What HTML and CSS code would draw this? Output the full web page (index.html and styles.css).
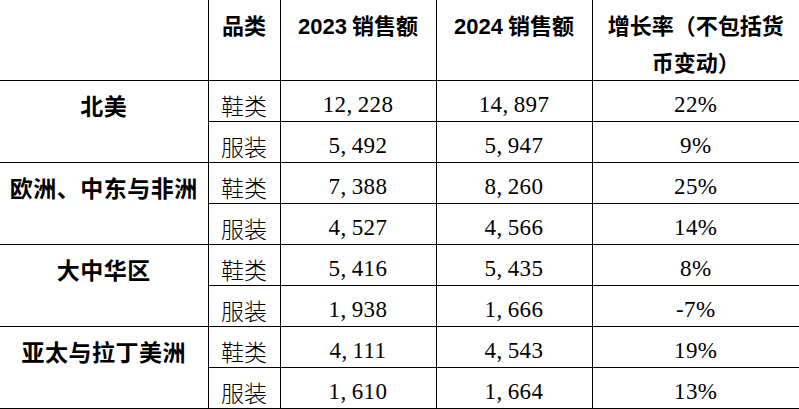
FILE: index.html
```html
<!DOCTYPE html>
<html lang="zh-CN">
<head>
<meta charset="utf-8">
<title>销售额</title>
<link rel="stylesheet" href="styles.css">
</head>
<body>
<table class="sales">
  <colgroup>
    <col class="c-region">
    <col class="c-cat">
    <col class="c-num">
    <col class="c-num">
    <col class="c-rate">
  </colgroup>
  <thead>
    <tr class="head">
      <th></th>
      <th>品类</th>
      <th><span class="lat">2023</span> 销售额</th>
      <th><span class="lat">2024</span> 销售额</th>
      <th>增长率（不包括货<br>币变动）</th>
    </tr>
  </thead>
  <tbody>
    <tr>
      <th class="region" rowspan="2">北美</th>
      <td class="cat">鞋类</td><td>12<span class="cm">,</span>228</td><td>14<span class="cm">,</span>897</td><td>22%</td>
    </tr>
    <tr>
      <td class="cat">服装</td><td>5<span class="cm">,</span>492</td><td>5<span class="cm">,</span>947</td><td>9%</td>
    </tr>
    <tr>
      <th class="region" rowspan="2">欧洲、中东与非洲</th>
      <td class="cat">鞋类</td><td>7<span class="cm">,</span>388</td><td>8<span class="cm">,</span>260</td><td>25%</td>
    </tr>
    <tr>
      <td class="cat">服装</td><td>4<span class="cm">,</span>527</td><td>4<span class="cm">,</span>566</td><td>14%</td>
    </tr>
    <tr>
      <th class="region" rowspan="2">大中华区</th>
      <td class="cat">鞋类</td><td>5<span class="cm">,</span>416</td><td>5<span class="cm">,</span>435</td><td>8%</td>
    </tr>
    <tr>
      <td class="cat">服装</td><td>1<span class="cm">,</span>938</td><td>1<span class="cm">,</span>666</td><td>-7%</td>
    </tr>
    <tr>
      <th class="region" rowspan="2">亚太与拉丁美洲</th>
      <td class="cat">鞋类</td><td>4<span class="cm">,</span>111</td><td>4<span class="cm">,</span>543</td><td>19%</td>
    </tr>
    <tr>
      <td class="cat">服装</td><td>1<span class="cm">,</span>610</td><td>1<span class="cm">,</span>664</td><td>13%</td>
    </tr>
  </tbody>
</table>
</body>
</html>
```

FILE: styles.css
```css
html, body {
  margin: 0;
  padding: 0;
  background: #fff;
}

.sales {
  width: 799px;
  border-collapse: collapse;
  table-layout: fixed;
  color: #000;
  font-family: "Liberation Serif", "Noto Sans CJK SC", serif;
  font-size: 23px;
}

.c-region { width: 208px; }
.c-cat { width: 72px; }
.c-num { width: 156px; }
.c-rate { width: 207px; }

.sales th,
.sales td {
  border: 1px solid #000;
  padding: 8px 0 0;
  line-height: 32px;
  height: 32px;
  text-align: center;
  vertical-align: top;
  white-space: nowrap;
}

.sales td {
  letter-spacing: 0.4px;
}

.sales .cat {
  font-family: "Noto Sans CJK SC", sans-serif;
  font-weight: 300;
  letter-spacing: 0;
}

.sales .cm {
  margin-right: 5px;
}

.sales thead th {
  border-top: none;
  font-family: "Noto Sans CJK SC", sans-serif;
  font-weight: 700;
  font-size: 22px;
  line-height: 37px;
  padding-top: 6px;
  height: 74px;
}

.sales thead th .lat {
  font-family: "Liberation Sans", sans-serif;
  font-weight: 700;
}

.sales tr > :first-child {
  border-left: none;
}

.sales tr > :last-child {
  border-right: none;
}

.sales .region {
  font-family: "Noto Sans CJK SC", sans-serif;
  font-weight: 700;
  font-size: 23px;
  letter-spacing: 0.5px;
}
```
